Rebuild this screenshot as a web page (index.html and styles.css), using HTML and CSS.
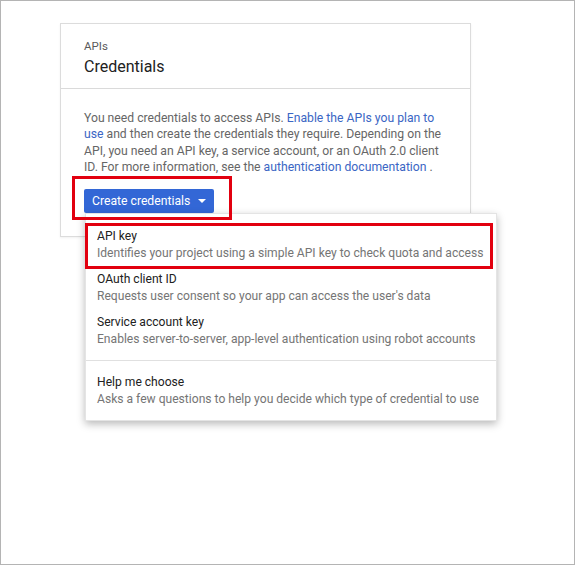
FILE: index.html
```html
<!DOCTYPE html>
<html>
<head>
<meta charset="utf-8">
<link rel="stylesheet" href="styles.css">
</head>
<body>
<div class="frame">
  <div class="card">
    <div class="card-header">
      <div class="eyebrow">APIs</div>
      <div class="title">Credentials</div>
    </div>
    <div class="card-body">
      <p class="intro">You need credentials to access APIs. <a href="#">Enable the APIs you plan to use</a> and then create the credentials they require. Depending on the API, you need an API key, a service account, or an OAuth 2.0 client ID. For more information, see the <a href="#">authentication documentation</a> .</p>
      <button class="create-btn">Create credentials <span class="caret"></span></button>
    </div>
  </div>

  <div class="menu">
    <div class="menu-item">
      <div class="item-title">API key</div>
      <div class="item-desc">Identifies your project using a simple API key to check quota and access</div>
    </div>
    <div class="menu-item">
      <div class="item-title">OAuth client ID</div>
      <div class="item-desc">Requests user consent so your app can access the user's data</div>
    </div>
    <div class="menu-item">
      <div class="item-title">Service account key</div>
      <div class="item-desc">Enables server-to-server, app-level authentication using robot accounts</div>
    </div>
    <div class="menu-divider"></div>
    <div class="menu-item">
      <div class="item-title">Help me choose</div>
      <div class="item-desc">Asks a few questions to help you decide which type of credential to use</div>
    </div>
  </div>

  <div class="highlight highlight-btn"></div>
  <div class="highlight highlight-item"></div>
</div>
</body>
</html>
```
FILE: styles.css
```css
html, body {
  margin: 0;
  padding: 0;
  background: #ffffff;
}

body {
  font-family: Roboto, "Noto Sans", Arial, sans-serif;
}

.frame {
  position: relative;
  box-sizing: border-box;
  width: 575px;
  height: 565px;
  border: 1px solid #b4b4b4;
  background: #ffffff;
  padding: 22px 0 0 59px;
}

.card {
  box-sizing: border-box;
  width: 411px;
  height: 214px;
  border: 1px solid #dcdcdc;
  background: #fff;
  box-shadow: 0 1px 2px rgba(0, 0, 0, 0.06);
}

.card-header {
  box-sizing: border-box;
  height: 65px;
  padding: 15px 23px 0;
  border-bottom: 1px solid #dadada;
}

.eyebrow {
  font-size: 11.5px;
  line-height: 15px;
  color: #5a5a5a;
}

.title {
  font-size: 16px;
  line-height: 20px;
  color: #212121;
  margin-top: 3px;
}

.card-body {
  padding: 21px 23px 0;
}

.intro {
  margin: 0;
  font-size: 12.2px;
  line-height: 16.4px;
  color: #666666;
  width: 360px;
}

.intro a {
  color: #3b66c4;
  text-decoration: none;
}

.create-btn {
  margin-top: 13px;
  display: inline-flex;
  align-items: center;
  height: 24px;
  width: 130px;
  padding: 0 8px;
  border: none;
  border-radius: 2px;
  background: #3367d6;
  color: #ffffff;
  font-family: Roboto, "Noto Sans", Arial, sans-serif;
  font-size: 12.2px;
  white-space: nowrap;
  box-sizing: border-box;
}

.caret {
  display: inline-block;
  width: 0;
  height: 0;
  margin-left: 8px;
  border-left: 4px solid transparent;
  border-right: 4px solid transparent;
  border-top: 4px solid #ffffff;
}

.menu {
  position: absolute;
  left: 84px;
  top: 212px;
  width: 412px;
  box-sizing: border-box;
  padding: 10px 0 7px;
  background: #ffffff;
  border: 1px solid #e4e4e4;
  box-shadow: 0 3px 8px rgba(0, 0, 0, 0.28);
}

.menu-item {
  padding: 4px 11px 5px;
}

.item-title {
  font-size: 12.1px;
  line-height: 17px;
  color: #212121;
}

.item-desc {
  font-size: 12.1px;
  line-height: 17px;
  color: #757575;
  white-space: nowrap;
}

.menu-divider {
  height: 1px;
  background: #e0e0e0;
  margin: 7px 0 9px;
}

.highlight {
  position: absolute;
  box-sizing: border-box;
  border: 3px solid #e2000f;
}

.highlight-btn {
  left: 71px;
  top: 175px;
  width: 160px;
  height: 44px;
}

.highlight-item {
  left: 84px;
  top: 222px;
  width: 408px;
  height: 46px;
}
```
